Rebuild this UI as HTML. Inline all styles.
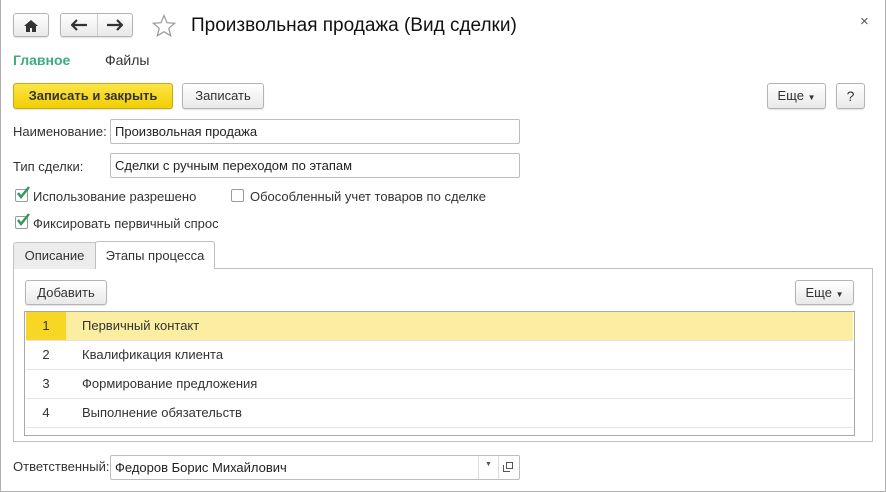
<!DOCTYPE html>
<html><head><meta charset="utf-8"><style>
*{box-sizing:border-box;margin:0;padding:0}
body{width:886px;height:492px;background:#fff;font-family:"Liberation Sans",Arial,sans-serif;font-size:13px;color:#333;position:relative;overflow:hidden}
.a{position:absolute}
.win{left:0;top:0;width:886px;height:492px;border:1px solid #b0b0b0;border-top:none}
.btn{position:absolute;border:1px solid #b4b4b4;border-radius:3px;background:linear-gradient(#fff,#e9e9e9);box-shadow:0 1px 1px rgba(0,0,0,.12);text-align:center;line-height:24px;color:#333}
.inp{position:absolute;border:1px solid #bdbdbd;border-radius:2px;background:#fff;padding-left:4px;line-height:23px;color:#222}
.cb{position:absolute;width:13px;height:13px;border:1px solid #9a9a9a;border-radius:2px;background:#fff}
.row{position:absolute;left:1px;right:1px;height:29px;border-bottom:1px solid #e4e4e4;line-height:28px}
.row .n{position:absolute;left:0;width:40px;text-align:center}
.row .t{position:absolute;left:56px}
</style></head><body>
<div class="a win"></div>
<div class="btn" style="left:13px;top:13px;width:36px;height:24px"><svg width="14" height="12" viewBox="0 0 14 12" style="margin-top:6px"><path d="M7 0L0 6h2v6h4V8h2v4h4V6h2z" fill="#333"/></svg></div>
<div class="btn" style="left:60px;top:13px;width:73px;height:24px"></div>
<div class="a" style="left:97px;top:14px;width:1px;height:22px;background:#ccc"></div>
<svg class="a" style="left:71px;top:19px" width="16" height="12"><path d="M1 6h15M6 1L1 6l5 5" stroke="#333" stroke-width="2.2" fill="none"/></svg>
<svg class="a" style="left:107px;top:19px" width="16" height="12"><path d="M0 6h15M10 1l5 5-5 5" stroke="#333" stroke-width="2.2" fill="none"/></svg>
<svg class="a" style="left:152px;top:14px" width="24" height="23"><path d="M12 1.5l3 7.2 7.7.6-5.9 5 1.9 7.5L12 17.7l-6.7 4.1 1.9-7.5-5.9-5 7.7-.6z" fill="none" stroke="#999" stroke-width="1.2"/></svg>
<div class="a" style="left:191px;top:15px;font-size:19px;color:#111">Произвольная продажа (Вид сделки)</div>
<div class="a" style="left:860px;top:13px;font-size:15px;color:#555">×</div>
<div class="a" style="left:13px;top:52px;font-size:14px;font-weight:bold;color:#3cae7d">Главное</div>
<div class="a" style="left:105px;top:52px;font-size:14px;color:#333">Файлы</div>
<div class="btn" style="left:13px;top:83px;width:160px;height:26px;background:linear-gradient(#fce448,#f1cf00);border-color:#c6aa1a;font-weight:bold;color:#333">Записать и закрыть</div>
<div class="btn" style="left:182px;top:83px;width:82px;height:26px">Записать</div>
<div class="btn" style="left:767px;top:83px;width:59px;height:26px">Еще <span style="font-size:8px">▼</span></div>
<div class="btn" style="left:836px;top:83px;width:29px;height:26px;font-size:14px">?</div>
<div class="a" style="left:13px;top:124px">Наименование:</div>
<div class="inp" style="left:110px;top:119px;width:410px;height:25px">Произвольная продажа</div>
<div class="a" style="left:13px;top:159px">Тип сделки:</div>
<div class="inp" style="left:110px;top:153px;width:410px;height:25px">Сделки с ручным переходом по этапам</div>
<div class="cb" style="left:15px;top:189px"></div><svg class="a" style="left:16px;top:186px" width="14" height="14"><path d="M2 7l3 4 8-10" stroke="#2d9b54" stroke-width="2.4" fill="none"/></svg>
<div class="a" style="left:33px;top:189px">Использование разрешено</div>
<div class="cb" style="left:231px;top:189px"></div>
<div class="a" style="left:250px;top:189px">Обособленный учет товаров по сделке</div>
<div class="cb" style="left:15px;top:216px"></div><svg class="a" style="left:16px;top:213px" width="14" height="14"><path d="M2 7l3 4 8-10" stroke="#2d9b54" stroke-width="2.4" fill="none"/></svg>
<div class="a" style="left:33px;top:216px">Фиксировать первичный спрос</div>
<div class="a" style="left:13px;top:268px;width:860px;height:174px;border:1px solid #bfbfbf"></div>
<div class="a" style="left:13px;top:242px;width:83px;height:27px;background:#ececec;border:1px solid #c4c4c4;border-bottom:none;border-radius:3px 0 0 0;text-align:center;line-height:26px">Описание</div>
<div class="a" style="left:95px;top:241px;width:120px;height:28px;background:#fff;border:1px solid #bfbfbf;border-bottom:none;border-radius:3px 3px 0 0;text-align:center;line-height:28px">Этапы процесса</div>
<div class="btn" style="left:25px;top:280px;width:82px;height:25px">Добавить</div>
<div class="btn" style="left:795px;top:280px;width:59px;height:25px">Еще <span style="font-size:8px">▼</span></div>
<div class="a" style="left:24px;top:311px;width:831px;height:125px;border:1px solid #a8a8a8">
<div class="row" style="top:0;background:#fbeea0"><div class="n" style="background:#f8d626;height:28px">1</div><div class="t">Первичный контакт</div></div>
<div class="row" style="top:29px"><div class="n">2</div><div class="t">Квалификация клиента</div></div>
<div class="row" style="top:58px"><div class="n">3</div><div class="t">Формирование предложения</div></div>
<div class="row" style="top:87px"><div class="n">4</div><div class="t">Выполнение обязательств</div></div>
</div>
<div class="a" style="left:13px;top:459px">Ответственный:</div>
<div class="inp" style="left:110px;top:455px;width:410px;height:25px">Федоров Борис Михайлович</div>
<div class="a" style="left:478px;top:456px;width:1px;height:23px;background:#ddd"></div>
<div class="a" style="left:498px;top:456px;width:1px;height:23px;background:#ddd"></div>
<div class="a" style="left:485px;top:461px;font-size:7px;color:#555">▼</div>
<svg class="a" style="left:503px;top:462px" width="10" height="10"><rect x="3.5" y="0.5" width="6" height="6" fill="none" stroke="#555"/><path d="M0.5 3v6.5H7" fill="none" stroke="#555"/></svg>
</body></html>
